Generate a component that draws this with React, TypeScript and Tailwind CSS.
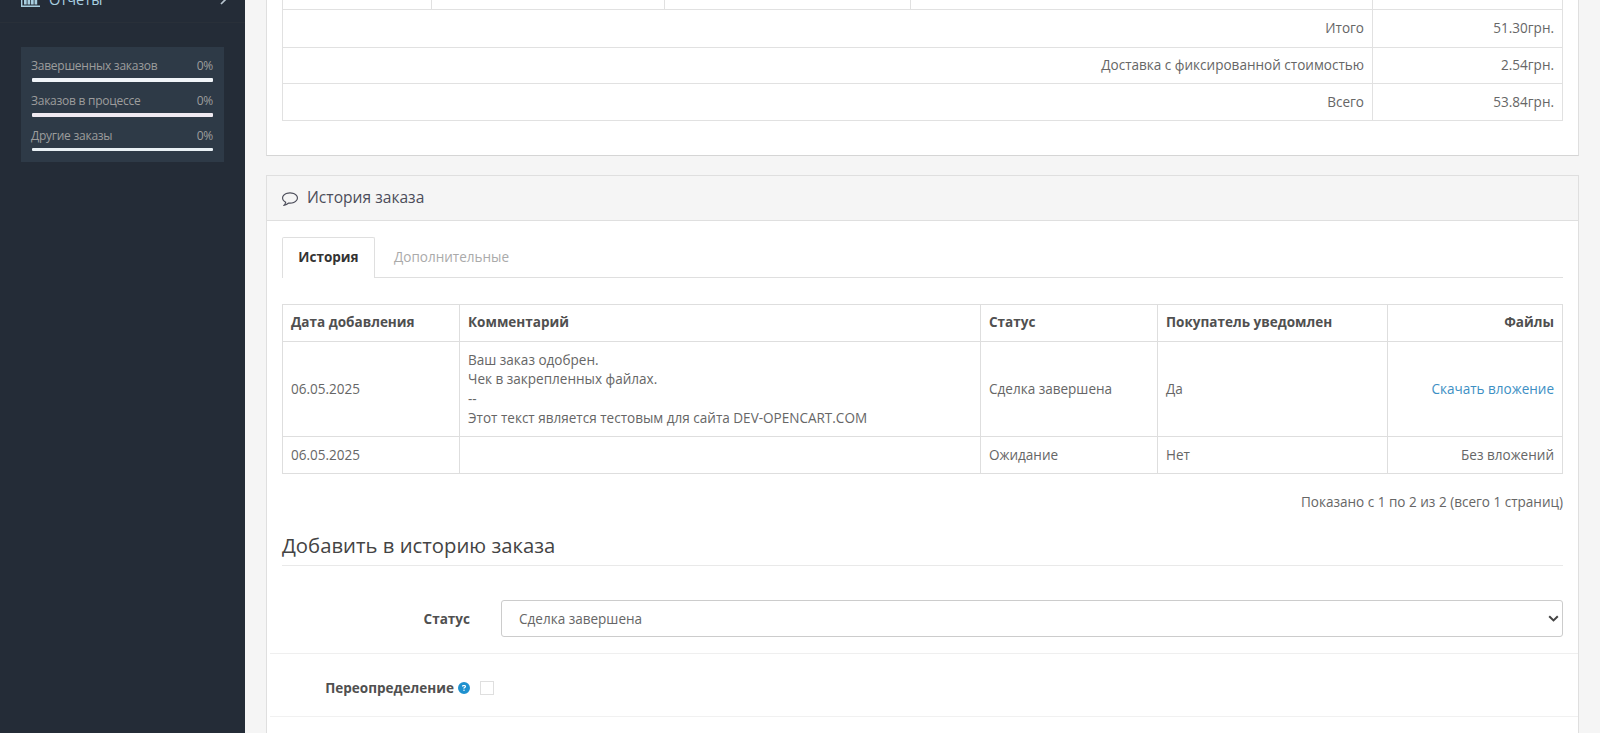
import React from 'react';
import { FaCircleQuestion } from 'react-icons/fa6';

const stats = [
  { label: 'Завершенных заказов', value: '0%', bar: 'h-1 bg-[#f0f4f8]' },
  { label: 'Заказов в процессе', value: '0%', bar: 'h-1 bg-[#f0eaf1]' },
  { label: 'Другие заказы', value: '0%', bar: 'h-[3px] bg-[#e9f0f5]' },
];

const totals = [
  { label: 'Итого', value: '51.30грн.', height: 'h-[37px]' },
  { label: 'Доставка с фиксированной стоимостью', value: '2.54грн.', height: 'h-[35px]' },
  { label: 'Всего', value: '53.84грн.', height: 'h-[36px] pt-px' },
];

const history = [
  {
    date: '06.05.2025',
    comment: ['Ваш заказ одобрен.', 'Чек в закрепленных файлах.', '--', 'Этот текст является тестовым для сайта DEV-OPENCART.COM'],
    status: 'Сделка завершена',
    notified: 'Да',
    file: 'Скачать вложение',
    link: true,
    height: 'h-[95px]',
  },
  {
    date: '06.05.2025',
    comment: [],
    status: 'Ожидание',
    notified: 'Нет',
    file: 'Без вложений',
    link: false,
    height: 'h-[37px]',
  },
];

const ChartIcon = () => (
  <svg className="h-[16px] w-[19px]" viewBox="0 0 19 16" fill="currentColor">
    <path d="M0 0h1.4v14.6H19V16H0zM3 8h2.7v5.6H3zM6.5 3h2.7v10.6H6.5zM10 5.5h2.7v8.1H10zM13.5 1.5h2.7v12.1h-2.7z" />
  </svg>
);

const CommentIcon = () => (
  <svg className="mr-[9px] h-[16px] w-[16px]" viewBox="0 0 1792 1792" fill="currentColor">
    <path
      transform="matrix(1 0 0 -1 0 1536)"
      d="M896 1152q-204 0-381.5-69.5t-282-187.5t-104.5-255q0-112 71.5-213.5t201.5-175.5l87-50l-27-96q-24-91-70-172q152 63 275 171l43 38l57-6q69-8 130-8q204 0 381.5 69.5t282 187.5t104.5 255t-104.5 255t-282 187.5t-381.5 69.5zM1792 640q0-174-120-321.5t-326-233t-450-85.5q-70 0-145 8q-198-175-460-242q-49-14-114-22h-5q-15 0-27 10.5t-16 27.5v1q-3 4-.5 12t2 10t4.5 9.5l6 9t7 8.5t8 9q7 8 31 34.5t34.5 38t31 39.5t32.5 51t27 59t26 76q-157 89-247.5 220t-90.5 281q0 130 71 248.5t191 204.5t286 136.5t348 50.5t348-50.5t286-136.5t191-204.5t71-248.5z"
    />
  </svg>
);

const Sidebar = () => (
  <aside className="w-[245px] shrink-0 bg-[#242c37]">
    <div className="h-[23px] overflow-hidden border-b border-[#293039]">
      <div className="-mt-[14px] flex items-center pl-[21px] pr-[18px] text-[#a9cfe0]">
        <ChartIcon />
        <span className="ml-[9px] text-[14.6px] leading-[26px]">Отчеты</span>
        <svg className="ml-auto h-[11px] w-[7px]" viewBox="0 0 7 11" fill="none" stroke="#b8c5cf" strokeWidth="1.7">
          <path d="M1 1l4.5 4.5L1 10" />
        </svg>
      </div>
    </div>
    <div className="ml-[21px] mt-[24px] h-[115px] w-[203px] bg-[#2e3a47] pl-[10px] pr-[11px] pt-[8px]">
      {stats.map((item) => (
        <div key={item.label} className="h-[35px]">
          <div className="flex h-[23px] items-start justify-between text-[12px] leading-[22px] tracking-[-0.25px] text-[#9d9d9d]">
            <span>{item.label}</span>
            <span>{item.value}</span>
          </div>
          <div className={`ml-px rounded-[1px] ${item.bar}`} />
        </div>
      ))}
    </div>
  </aside>
);

const TotalsPanel = () => (
  <section className="h-[156px] border border-t-0 border-[#dfdfdf] border-b-[#d5d5d5] bg-white px-[15px]">
    <div className="border-x border-[#e1e1e1]">
      <div className="flex h-[10px] border-b border-[#e1e1e1]">
        <div className="w-[149px] border-r border-[#e1e1e1]" />
        <div className="w-[233px] border-r border-[#e1e1e1]" />
        <div className="w-[246px] border-r border-[#e1e1e1]" />
        <div className="flex-1 border-r border-[#e1e1e1]" />
        <div className="w-[189px]" />
      </div>
      {totals.map((row) => (
        <div key={row.label} className="flex border-b border-[#e1e1e1]">
          <div className={`flex flex-1 items-center justify-end border-r border-[#e1e1e1] pr-2 ${row.height}`}>{row.label}</div>
          <div className={`flex w-[189px] items-center justify-end pr-2 ${row.height}`}>{row.value}</div>
        </div>
      ))}
    </div>
  </section>
);

const HistoryTable = () => (
  <table className="mt-[26px] w-full table-fixed border-collapse">
    <colgroup>
      <col className="w-[177px]" />
      <col className="w-[521px]" />
      <col className="w-[177px]" />
      <col className="w-[230px]" />
      <col />
    </colgroup>
    <thead>
      <tr className="h-[37px] text-left text-[#505050] [&>th]:border [&>th]:border-[#dedede] [&>th]:px-2 [&>th]:pb-px">
        <th>Дата добавления</th>
        <th>Комментарий</th>
        <th>Статус</th>
        <th>Покупатель уведомлен</th>
        <th className="text-right">Файлы</th>
      </tr>
    </thead>
    <tbody>
      {history.map((row) => (
        <tr key={row.status} className={`[&>td]:border [&>td]:border-[#dedede] [&>td]:px-2 ${row.height}`}>
          <td className="pt-px">{row.date}</td>
          <td className="pt-px leading-[19.4px]">
            {row.comment.map((line) => (
              <div key={line}>{line}</div>
            ))}
          </td>
          <td className="pt-px">{row.status}</td>
          <td className="pt-px">{row.notified}</td>
          <td className="pt-px text-right">{row.link ? <a className="text-[#3d8fc4]">{row.file}</a> : row.file}</td>
        </tr>
      ))}
    </tbody>
  </table>
);

const HistoryPanel = () => (
  <section className="mt-[19px] h-[600px] border border-[#dfdfdf] bg-white">
    <h3 className="flex h-[45px] items-center border-b border-[#dfdfdf] bg-[#f5f5f5] pb-px pl-[15px] text-[15.6px] text-[#4c4d5a]">
      <CommentIcon />
      История заказа
    </h3>
    <div className="px-[15px] pt-4">
      <div className="flex h-[41px] border-b border-[#dfdfdf]">
        <div className="-mb-px flex w-[93px] items-center justify-center rounded-t-[2px] border border-b-0 border-[#dfdfdf] bg-white pb-[2px] font-bold text-[#333]">
          История
        </div>
        <div className="flex items-center pl-[19px] text-[#aaa]">Дополнительные</div>
      </div>
      <HistoryTable />
      <div className="mt-[18px] text-right leading-[20px]">Показано с 1 по 2 из 2 (всего 1 страниц)</div>
      <div className="mt-[18px] h-[36px] border-b border-[#e9e9e9] text-[20.3px] leading-[30px] text-[#444]">
        Добавить в историю заказа
      </div>
    </div>
    <div className="ml-[3px] flex h-[88px] items-center border-b border-[#efefef] pr-[15px] pt-[17px]">
      <label className="w-[200px] pt-[3px] text-right font-bold text-[#505050]">Статус</label>
      <div className="ml-[31px] flex h-[37px] flex-1 items-center justify-between rounded-[3px] border border-[#ccc] pl-[17px] pr-[3px] text-[#666]">
        <span className="pt-[3px]">Сделка завершена</span>
        <svg className="h-[7px] w-[11px]" viewBox="0 0 11 7" fill="none" stroke="#444" strokeWidth="2">
          <path d="M1.2 1.2l4.3 4.2 4.3-4.2" />
        </svg>
      </div>
    </div>
    <div className="ml-[3px] flex h-[63px] items-center border-b border-[#f1f1f1] pt-[6px]">
      <label className="flex w-[200px] items-center justify-end font-bold text-[#505050]">
        Переопределение
        <FaCircleQuestion className="ml-[4px] h-[12px] w-[12px] text-[#1e91cf]" />
      </label>
      <div className="ml-[10px] h-[14px] w-[14px] border border-[#dfdfdf]" />
    </div>
  </section>
);

export default function App() {
  return (
    <div className="flex h-[733px] overflow-hidden bg-[#f5f5f5] font-['Open_Sans',sans-serif] text-[13.54px] text-[#666]">
      <Sidebar />
      <main className="flex-1 pl-[21px] pr-[21px]">
        <TotalsPanel />
        <HistoryPanel />
      </main>
    </div>
  );
}
